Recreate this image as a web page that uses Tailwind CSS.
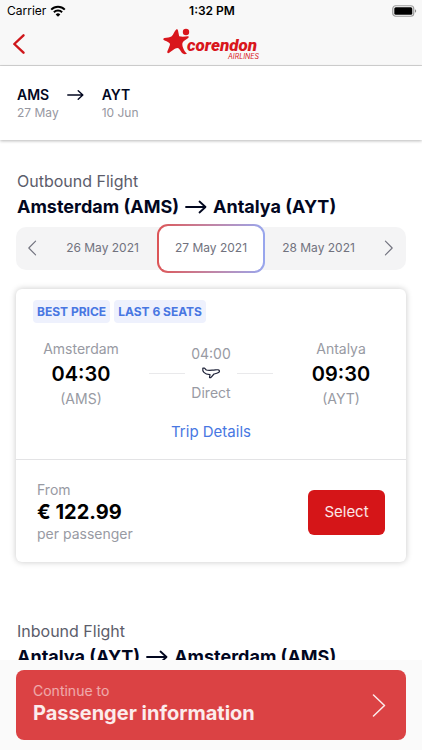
<!DOCTYPE html>
<html lang="en">
<head>
<meta charset="utf-8">
<meta name="viewport" content="width=device-width, initial-scale=1">
<title>Corendon Airlines – Select flight</title>
<script src="https://cdn.jsdelivr.net/npm/@tailwindcss/browser@4"></script>
</head>
<body class="flex h-screen flex-col overflow-hidden bg-white font-[Inter,sans-serif] text-[#02071f]">
<svg class="hidden" aria-hidden="true">
  <symbol id="arrow" viewBox="0 0 22 14"><path d="M1 7h19M14.500 1.500 20.500 7l-6 5.500" fill="none" stroke="currentColor" stroke-width="1.800" stroke-linecap="round" stroke-linejoin="round"/></symbol>
  <symbol id="prev" viewBox="0 0 12 20"><path d="M10.500 1.500 2 10l8.500 8.500" fill="none" stroke="currentColor" stroke-width="1.400" stroke-linecap="round" stroke-linejoin="round"/></symbol>
  <symbol id="next" viewBox="0 0 12 20"><path d="M1.500 1.500 10 10l-8.500 8.500" fill="none" stroke="currentColor" stroke-width="1.400" stroke-linecap="round" stroke-linejoin="round"/></symbol>
</svg>

<header class="shrink-0 border-b border-[#d6d6d6] bg-[#f8f8f8]">
  <div class="grid h-[22px] grid-cols-3 items-center pr-[5px] pl-[7px] text-xs leading-4 text-black">
    <div class="flex items-center gap-1">
      <span>Carrier</span>
      <svg class="h-3 w-4" viewBox="0 0 16 12" fill="none" stroke="#000" stroke-width="2"><path d="M1.200 4.600a9.600 9.600 0 0 1 13.600 0M3.900 7.300a5.800 5.800 0 0 1 8.200 0"/><path d="M8 11.800 5.700 9.400a3.300 3.300 0 0 1 4.600 0z" fill="#000" stroke="none"/></svg>
    </div>
    <div class="text-center font-semibold">1:32 PM</div>
    <svg class="h-3 w-[25px] justify-self-end" viewBox="0 0 25 12"><rect x=".75" y=".75" width="21" height="10.500" rx="3" fill="none" stroke="#9c9c9c" stroke-width="1.200"/><rect x="2.300" y="2.300" width="18" height="7.400" rx="1.500"/><path d="M23 4.200c1.600.6 1.600 3 0 3.600z" fill="#8a8a8a"/></svg>
  </div>
  <div class="grid h-[43px] grid-cols-3 items-center px-3">
    <button type="button" aria-label="Back" class="flex h-8 w-8 items-center text-[#cf171b]">
      <svg class="h-5 w-[14px]" viewBox="0 0 14 20"><path d="M11.500 1.300 2.300 10l9.200 8.700" fill="none" stroke="currentColor" stroke-width="2.400" stroke-linecap="round" stroke-linejoin="round"/></svg>
    </button>
    <svg class="h-8 w-[98px] justify-self-center overflow-visible" viewBox="0 0 98 32" role="img" aria-label="Corendon Airlines" fill="#d9161c">
      <circle cx="24" cy="4" r="3.200"/>
      <path d="M14.200 1.500c.9-.5 1.600.2 1.800 1.100l1.200 5.700c2.700.6 5.700.3 8.500 0 1.300-.1 1.500.9.500 1.600-2.100 1.600-5.500 3.300-5.800 5.300-.3 2 .3 4 1.400 6.200.8 1.700 1.700 2.900 3.200 4.200-2.200 1.200-4.400.4-5.700-1.600-1.300-2-2.400-4.100-4.100-4-2.100.1-5.300 3-7.900 4.800-1.400.9-2.500 0-1.900-1.500 1.100-2.700 2.700-5.800 2.600-7.200-.2-1.600-3.500-2.800-5.800-3.900-1.300-.6-1.200-1.800.2-2.200 2.600-.6 5.500-.3 7.300-1.700C11.600 6.700 12.400 2.800 14.200 1.500z"/>
      <text x="25" y="23" font-size="17" font-weight="900" font-style="italic" class="font-[Roboto,sans-serif]">corendon</text>
      <text x="97" y="31" text-anchor="end" font-size="7" font-style="italic">AIRLINES</text>
    </svg>
  </div>
</header>

<section aria-label="Trip summary" class="relative z-10 flex shrink-0 gap-[18px] bg-white px-[17px] pt-[19px] pb-[19px] shadow-[0_1px_3px_rgba(0,0,0,0.28)]">
  <div class="flex gap-2">
    <div><div class="text-sm leading-5 font-semibold">AMS</div><div class="text-xs leading-4 text-[#9697a1]">27 May</div></div>
    <svg class="mt-1 h-3 w-[17px]"><use href="#arrow"/></svg>
  </div>
  <div><div class="text-sm leading-5 font-semibold">AYT</div><div class="text-xs leading-4 text-[#9697a1]">10 Jun</div></div>
</section>

<main class="min-h-0 flex-1 overflow-hidden pt-[29px]">
  <section class="px-4">
    <p class="pl-px text-base leading-6 text-[#5c5d6b]">Outbound Flight</p>
    <h2 class="flex items-center gap-1.5 pl-px text-lg leading-[27px] font-bold">Amsterdam (AMS) <svg class="h-[14px] w-[22px]"><use href="#arrow"/></svg> Antalya (AYT)</h2>

    <nav aria-label="Departure date" class="mt-1 flex h-12 items-center text-xs text-[#71727e]">
      <div class="flex h-[43px] flex-1 items-center rounded-l-[10px] bg-[#f4f4f5]">
        <button type="button" aria-label="Previous day" class="flex h-full w-8 items-center justify-center"><svg class="h-4 w-[10px]"><use href="#prev"/></svg></button>
        <button type="button" class="h-full flex-1">26 May 2021</button>
      </div>
      <div class="flex h-[43px] bg-[#f4f4f5]">
        <div class="-my-[3px] rounded-[11px] bg-linear-to-r from-[#dc5456] to-[#97a6ee] p-0.5">
          <button type="button" aria-current="date" class="h-[45px] w-[104px] rounded-[9px] bg-white">27 May 2021</button>
        </div>
      </div>
      <div class="flex h-[43px] flex-1 items-center rounded-r-[10px] bg-[#f4f4f5]">
        <button type="button" class="h-full flex-1">28 May 2021</button>
        <button type="button" aria-label="Next day" class="flex h-full w-[34px] items-center justify-center"><svg class="h-4 w-[10px]"><use href="#next"/></svg></button>
      </div>
    </nav>

    <article class="mt-[17px] rounded-md bg-white shadow-[0_0_6px_rgba(0,0,0,0.22)]">
      <div class="px-[17px] pt-[11px] pb-4">
        <div class="flex gap-1 text-xs leading-[23px] font-bold text-[#4877e2]">
          <span class="rounded bg-[#eef1fd] px-1">BEST PRICE</span>
          <span class="rounded bg-[#eef1fd] px-1">LAST 6 SEATS</span>
        </div>
        <div class="mt-4 grid grid-cols-[96px_1fr_96px] text-center text-sm text-[#989aa3]">
          <div>
            <div class="leading-5">Amsterdam</div>
            <div class="text-xl leading-[30px] font-semibold text-black">04:30</div>
            <div class="leading-5">(AMS)</div>
          </div>
          <div class="pt-[5px]">
            <div class="leading-5">04:00</div>
            <div class="mx-5 flex h-[18px] items-center justify-between">
              <span class="h-px w-9 bg-[#e9e9eb]"></span>
              <svg class="h-3 w-5" viewBox="0 0 20 12" fill="none" stroke="#20243a" stroke-width="1.200" stroke-linejoin="round" stroke-linecap="round"><path d="M1.800 1.200h1.700L5.300 3c2.200.6 5 .2 7.500.1 1.500-.1 3-.5 4.400-.3 1.600.3 1.700 1.900.3 2.800-1.200.8-2.900 1.100-4.500 1.400L9.800 10.600H8.500l.5-3C6.600 7.400 4.400 6.800 2.900 5.300 1.800 4.200 1.500 2.700 1.800 1.200z"/></svg>
              <span class="h-px w-9 bg-[#e9e9eb]"></span>
            </div>
            <div class="pt-px leading-5">Direct</div>
          </div>
          <div>
            <div class="leading-5">Antalya</div>
            <div class="text-xl leading-[30px] font-semibold text-black">09:30</div>
            <div class="leading-5">(AYT)</div>
          </div>
        </div>
        <div class="mt-3 flex justify-center"><a href="#trip-details" class="text-[15px] leading-[22px] text-[#4877e2]">Trip Details</a></div>
      </div>
      <div class="flex items-center justify-between border-t border-[#e3e3e5] pt-5 pr-[21px] pb-[18px] pl-[21px]">
        <div class="text-sm leading-5 text-[#989aa3]">
          <div>From</div>
          <div class="text-xl leading-6 font-bold text-black">€ 122.99</div>
          <div>per passenger</div>
        </div>
        <button type="button" class="h-[45px] w-[77px] rounded-md bg-[#d51518] text-[15px] text-white/90">Select</button>
      </div>
    </article>
  </section>

  <section class="mt-[57px] px-4">
    <p class="pl-px text-base leading-6 text-[#5c5d6b]">Inbound Flight</p>
    <h2 class="flex items-center gap-1.5 pl-px text-lg leading-[27px] font-bold">Antalya (AYT) <svg class="h-[14px] w-[22px]"><use href="#arrow"/></svg> Amsterdam (AMS)</h2>
  </section>
</main>

<footer class="shrink-0 bg-[#fafafa] px-4 pt-[10px] pb-[10px]">
  <button type="button" class="flex h-[70px] w-full items-center justify-between rounded-lg bg-[#db4244] pr-5 pl-[17px] text-left text-white/90">
    <span class="block pb-1"><span class="block text-sm leading-5 text-white/55">Continue to</span><span class="block text-xl leading-6 font-bold">Passenger information</span></span>
    <svg class="h-[23px] w-[14px]" viewBox="0 0 14 23"><path d="M1.500 1 12.500 11.500l-11 10.500" fill="none" stroke="currentColor" stroke-width="1.500" stroke-linecap="round" stroke-linejoin="round"/></svg>
  </button>
</footer>
</body>
</html>
